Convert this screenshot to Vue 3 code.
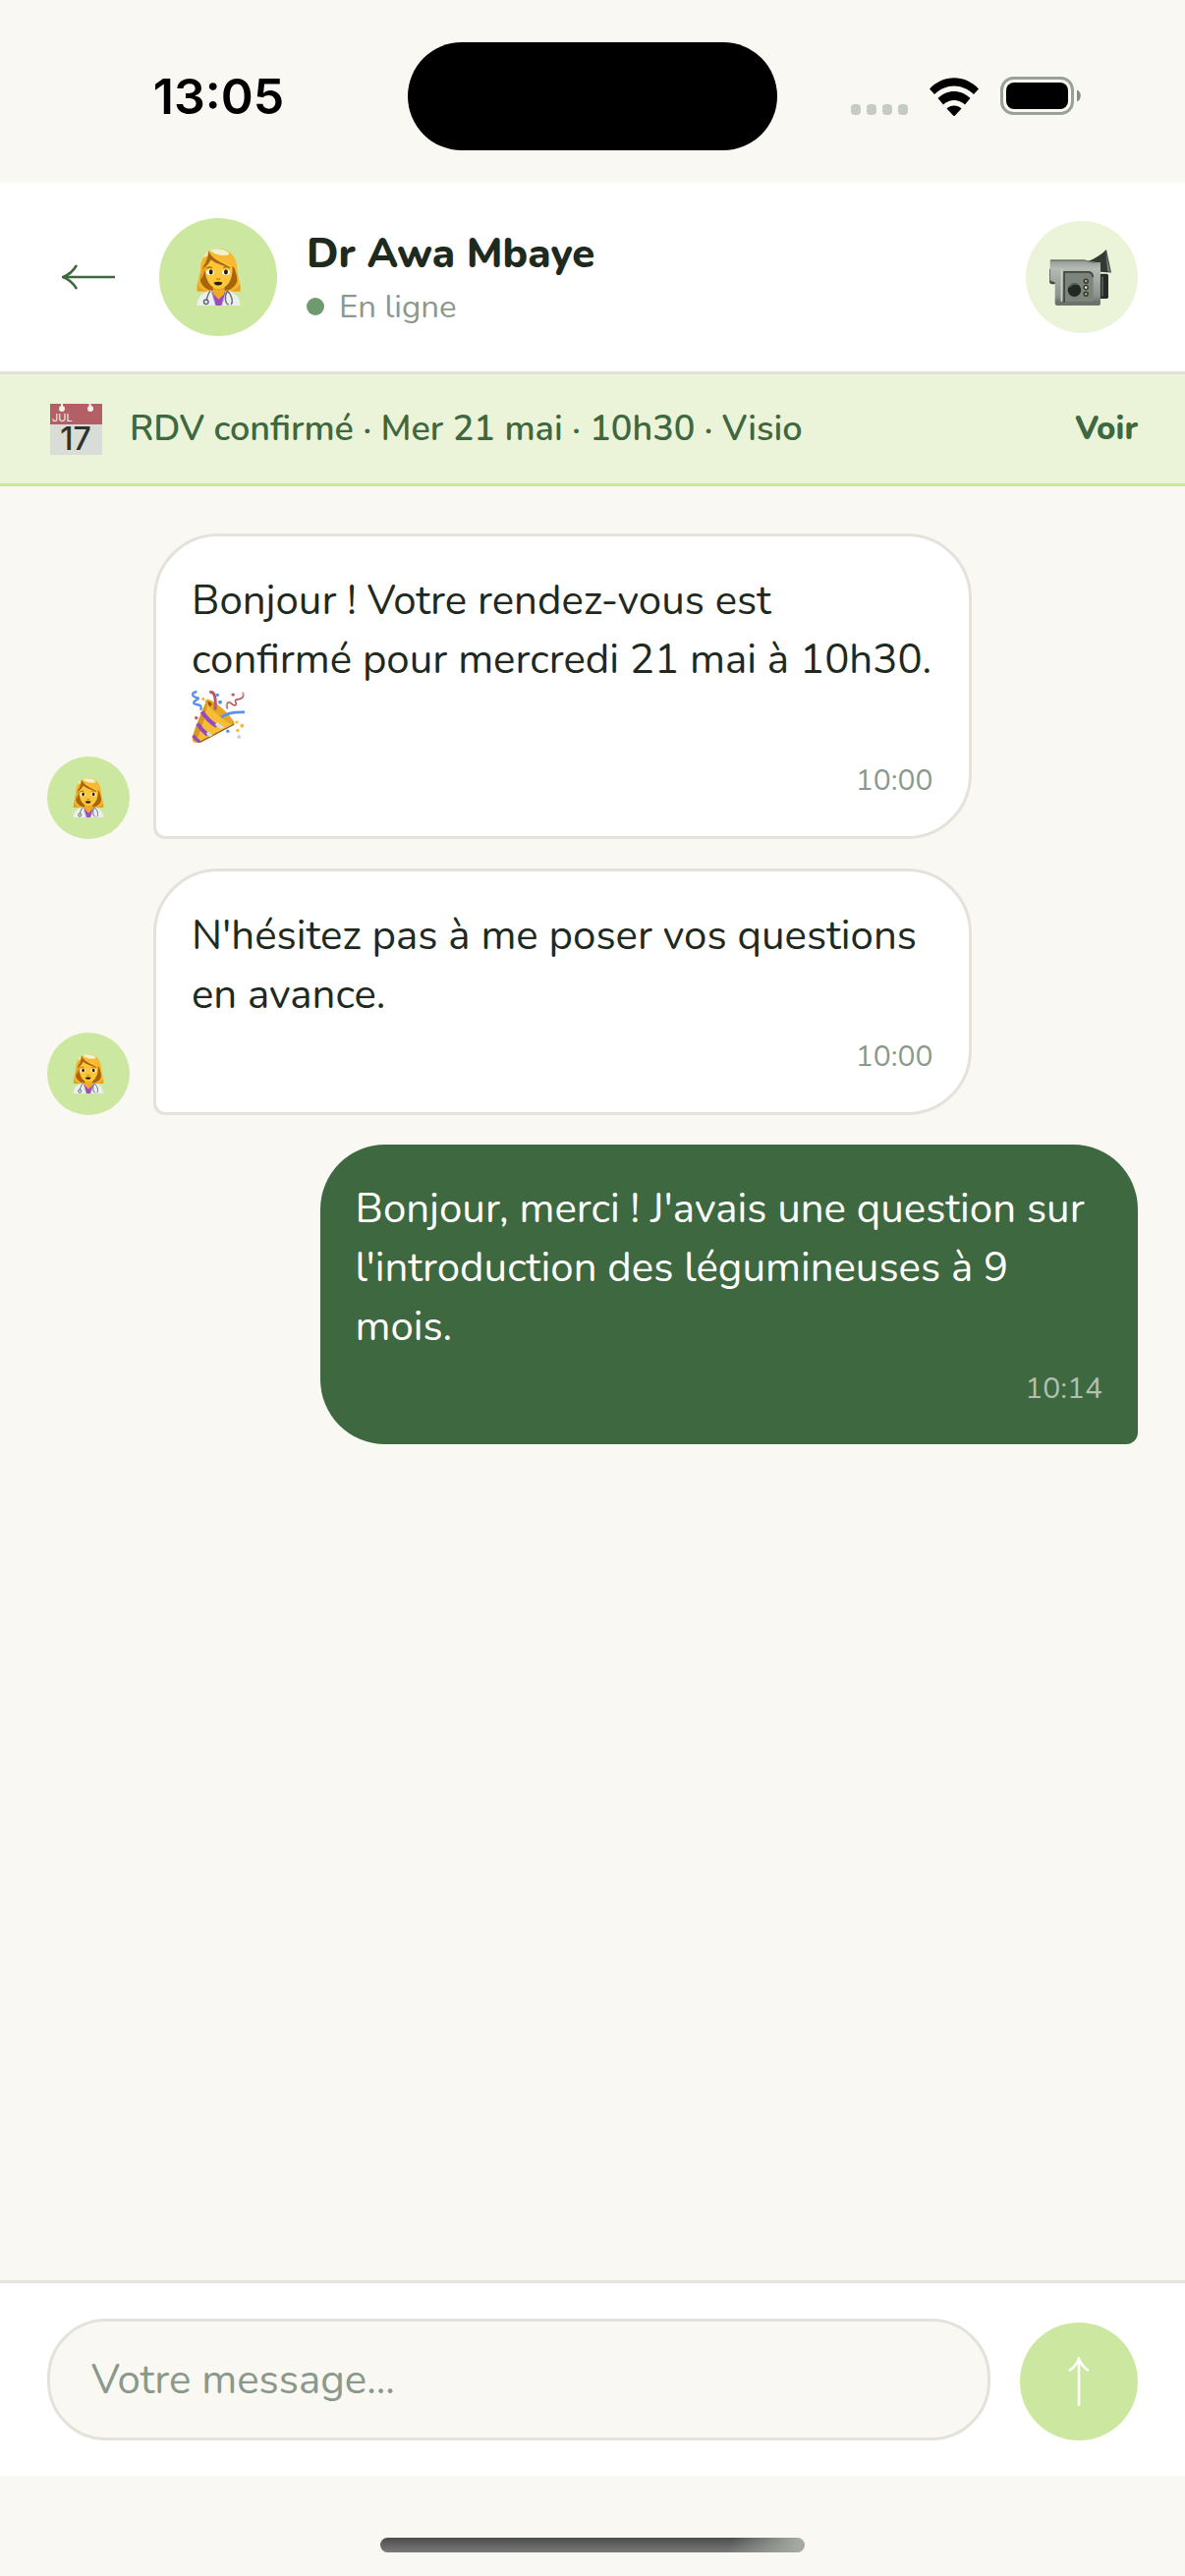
<script setup>
import { ref } from 'vue'

const draft = ref('')

const messages = [
  {
    id: 1,
    mine: false,
    text: 'Bonjour ! Votre rendez-vous est confirmé pour mercredi 21 mai à 10h30.',
    party: true,
    time: '10:00',
  },
  {
    id: 2,
    mine: false,
    text: "N'hésitez pas à me poser vos questions en avance.",
    time: '10:00',
  },
  {
    id: 3,
    mine: true,
    text: "Bonjour, merci ! J'avais une question sur l'introduction des légumineuses à 9 mois.",
    time: '10:14',
  },
]
</script>

<template>
  <div class="screen">
    <!-- shared drawing, used by every avatar -->
    <svg class="sprite" aria-hidden="true">
      <symbol id="doctor" viewBox="0 0 135 175">
        <path d="M68 0C34 0 14 26 12 58C11 82 0 98 1 131H134C134 98 125 82 124 58C122 26 102 0 68 0Z" fill="#f6b62c" />
        <path d="M2 108V131H134V108C128 120 118 126 108 130H28C18 126 8 120 2 108Z" fill="#e5a023" />
        <path d="M22 48C16 76 10 88 12 102C18 116 30 126 46 130H92C108 124 118 116 124 102C126 86 118 68 112 48Z" fill="#a8640b" />
        <path d="M50 112H86V142L68 158L50 142Z" fill="#e8a51d" />
        <path d="M26 62C26 38 46 24 68 24S110 38 110 64C110 98 92 124 68 124S26 98 26 62Z" fill="#fcc63a" />
        <path d="M38 10C30 24 26 44 18 60C14 72 12 84 13 96C20 84 26 66 31 54C37 42 42 34 40 26Z" fill="#e9a21f" />
        <path d="M37 8C50 30 88 40 122 62C120 28 100 2 68 0C56 0 46 3 37 8Z" fill="#fbb933" />
        <path d="M40 6C56 -1 82 -2 98 12C101 15 99 19 94 20C76 24 56 18 40 6Z" fill="#eef2cf" />
        <path d="M20 28C24 18 29 12 35 9L33 24C28 24 24 26 20 28Z" fill="#f2edb8" />
        <path d="M37 6C42 32 80 42 106 60C84 52 60 48 44 34C36 50 24 58 16 62C28 48 36 30 37 6Z" fill="#a96510" />
        <path d="M30 61Q38 55 47 59M82 59Q92 53 102 60" fill="none" stroke="#a66a12" stroke-width="4" />
        <ellipse cx="42" cy="73" rx="12" ry="8" fill="#fff" />
        <ellipse cx="90" cy="73" rx="12" ry="8" fill="#fff" />
        <ellipse cx="44" cy="72" rx="6" ry="8" fill="#2b1a06" />
        <ellipse cx="90" cy="72" rx="6" ry="8" fill="#2b1a06" />
        <path d="M60 92Q66 98 73 92" fill="none" stroke="#d9921c" stroke-width="5" />
        <path d="M53 104Q66 99 79 104Q78 113 66 113Q54 113 53 104Z" fill="#2a200f" />
        <path d="M44 134H92L94 175H44Z" fill="#9a4cc2" />
        <path d="M50 126H86L84 140L68 156L52 140Z" fill="#f0aa23" />
        <path d="M0 175C2 150 14 136 44 128L58 175Z" fill="#eceef0" />
        <path d="M134 175C132 150 122 136 92 128L77 175Z" fill="#eceef0" />
        <path d="M44 128L58 175M92 128L77 175" stroke="#bfc5c8" stroke-width="3" />
        <path d="M42 130C34 140 32 150 30 160M94 130C84 148 88 170 98 172M94 130C110 144 112 164 106 172" fill="none" stroke="#5b6770" stroke-width="4" />
        <circle cx="29" cy="164" r="7" fill="#dfe3e5" stroke="#5b6770" stroke-width="4" />
      </symbol>
    </svg>

    <div class="status-bar">
      <span class="clock">13:05</span>
      <div class="island"></div>
      <div class="indicators">
        <svg width="58" height="40" viewBox="0 0 58 40" aria-hidden="true">
          <rect v-for="i in 4" :key="i" :x="(i - 1) * 16" y="28" width="10" height="11" rx="4" fill="#c6cbc3" />
        </svg>
        <svg width="50" height="40" viewBox="1 0 50 40" aria-hidden="true">
          <path d="M1 12.500C15-2.500 37-2.500 51 12.500L46 18C34 6.500 18 6.500 6 18Z" />
          <path d="M9.500 22C19 12.500 33 12.500 42.500 22L37 28.500C30.500 22.500 21.500 22.500 15 28.500Z" />
          <path d="M18.500 32.500C22.500 28.500 29.500 28.500 33.500 32.500L26 40.500Z" />
        </svg>
        <svg width="83" height="40" viewBox="0 0 83 40" aria-hidden="true">
          <rect x="1.500" y="1.500" width="72" height="36" rx="12" fill="none" stroke="#9aa197" stroke-width="3" />
          <rect x="6" y="6" width="63" height="27" rx="8" />
          <path d="M78 13.500C83 15 83 24 78 25.500Z" fill="#858c83" />
        </svg>
      </div>
    </div>

    <header class="header">
      <button class="back" type="button" aria-label="Retour">
        <svg width="54" height="26" viewBox="1 1 54 26" aria-hidden="true">
          <path d="M55 14H3" fill="none" stroke="#3e693e" stroke-width="2.500" />
          <path d="M16 2C13 7 8 12 2 14C8 16 13 21 16 26" fill="none" stroke="#3e693e" stroke-width="2.500" />
        </svg>
      </button>
      <div class="avatar">
        <svg width="45" height="58" aria-hidden="true"><use href="#doctor" /></svg>
      </div>
      <div class="contact">
        <h1 class="name">Dr Awa Mbaye</h1>
        <p class="presence"><span class="dot"></span>En ligne</p>
      </div>
      <button class="video" type="button" aria-label="Appel vidéo">
        <svg width="66" height="57" viewBox="205 192 197 170" aria-hidden="true">
          <defs>
            <linearGradient id="metal" x1="0" y1="0" x2="0" y2="1">
              <stop offset="0" stop-color="#8f958f" />
              <stop offset="0.2" stop-color="#b5bab5" />
              <stop offset="0.8" stop-color="#8c928c" />
              <stop offset="1" stop-color="#5d625d" />
            </linearGradient>
          </defs>
          <path d="M310 230C340 224 362 208 378 192L393 262L360 260V236Z" fill="#333a34" />
          <path d="M376 196L382 258L390 260Z" fill="#788078" />
          <rect x="356" y="266" width="28" height="75" rx="5" fill="#262b27" />
          <path d="M366 274V334" stroke="#666d67" stroke-width="4" />
          <rect x="205" y="248" width="22" height="49" rx="7" fill="#444a45" />
          <path d="M207 226Q207 222 212 222H310Q340 234 360 230V356Q360 361 354 361H228Q222 361 222 355V292L207 286Z" fill="url(#metal)" />
          <path d="M208 226H314L344 232" fill="none" stroke="#737a74" stroke-width="4" />
          <path d="M226 348H358V361H226Z" fill="#6c726c" />
          <path d="M248 258H326Q338 260 338 274V350H248Z" fill="#7b857b" />
          <path d="M250 352V260H324Q336 261 337 276" fill="none" stroke="#3f4740" stroke-width="5" />
          <path d="M242 250V350" stroke="#c9cec8" stroke-width="5" />
          <circle cx="281" cy="315" r="20" fill="#222823" />
          <path d="M266 306Q275 292 292 298" fill="none" stroke="#555c55" stroke-width="5" />
          <g stroke="#303630" stroke-width="4">
            <circle cx="316" cy="288" r="6" fill="#b5a26a" />
            <circle cx="316" cy="307" r="6" fill="#e4e6e4" />
            <circle cx="316" cy="327" r="6" fill="#b5a26a" />
          </g>
        </svg>
      </button>
    </header>

    <div class="banner">
      <svg width="60" height="60" viewBox="0 0 60 60" aria-hidden="true">
        <rect x="3" y="4" width="53" height="52" fill="#dadcd8" />
        <rect x="3" y="4" width="53" height="21" fill="#b45f66" />
        <path d="M15 4V8M43 4L45 8" stroke="#eef3e4" stroke-width="2" />
        <circle cx="15" cy="9" r="3" fill="#eef3e4" />
        <circle cx="44" cy="9" r="3" fill="#eef3e4" />
        <text class="cal-month" x="5" y="22">JUL</text>
        <text class="cal-day" x="29" y="51" text-anchor="middle">17</text>
      </svg>
      <span class="banner-text">RDV confirmé · Mer 21 mai · 10h30 · Visio</span>
      <a class="banner-link" href="#rdv">Voir</a>
    </div>

    <main class="messages">
      <div
        v-for="message in messages"
        :key="message.id"
        class="row"
        :class="{ mine: message.mine }"
      >
        <div v-if="!message.mine" class="avatar small">
          <svg width="32" height="40" aria-hidden="true"><use href="#doctor" /></svg>
        </div>
        <div class="bubble">
          <p class="text">
            {{ message.text }}
            <svg v-if="message.party" class="party" width="54" height="54" viewBox="48 40 160 160" aria-hidden="true">
              <path d="M96 68C120 76 158 108 176 141L68 201Q48 202 50 186Z" fill="#f6bd35" />
              <path d="M96 68C84 92 56 158 50 186Q54 196 62 198C76 160 96 110 96 68Z" fill="#d9991f" />
              <path d="M88 76Q92 66 102 70C126 80 160 112 176 136Q179 146 170 146C146 134 108 102 88 76Z" fill="#e5a727" />
              <path d="M96 76Q104 74 110 84L102 92Z" fill="#8d5308" />
              <path d="M68 201L176 144" stroke="#93600f" stroke-width="4" />
              <path d="M79 106C92 126 108 140 124 150" fill="none" stroke="#9549c4" stroke-width="12" />
              <path d="M118 146L136 158L146 154L126 138Z" fill="#dcdde0" />
              <path d="M66 142C74 156 84 166 96 176" fill="none" stroke="#9549c4" stroke-width="12" />
              <path d="M92 172L102 182L112 177L98 166Z" fill="#dcdde0" />
              <path d="M53 178Q60 190 72 197" fill="none" stroke="#9549c4" stroke-width="10" />
              <path d="M102 48C118 44 122 62 119 101" fill="none" stroke="#b85b64" stroke-width="9" />
              <path d="M64 46C42 50 52 62 64 64C80 66 48 74 56 82C66 88 82 82 75 102" fill="none" stroke="#5b8ff0" stroke-width="7" />
              <path d="M138 123Q160 106 208 108" fill="none" stroke="#5b8ff0" stroke-width="8" />
              <path d="M156 98C150 76 162 76 168 82C178 92 186 86 180 76C178 66 190 72 198 66Q208 60 202 48" fill="none" stroke="#b85b64" stroke-width="5" />
              <path d="M152 92C150 74 160 72 168 78M198 62Q206 52 202 46" fill="none" stroke="#c9cbcb" stroke-width="3" />
              <g fill="#5b8ff0">
                <circle cx="126" cy="56" r="5" />
                <circle cx="134" cy="78" r="6" />
                <circle cx="157" cy="165" r="5" />
              </g>
              <g fill="#f1bd3d">
                <circle cx="83" cy="68" r="5" />
                <circle cx="184" cy="138" r="5" />
                <circle cx="200" cy="149" r="6" />
                <circle cx="187" cy="163" r="5" />
              </g>
              <g fill="#b85b64">
                <circle cx="173" cy="55" r="5" />
                <circle cx="62" cy="125" r="5" />
              </g>
              <circle cx="191" cy="182" r="6" fill="#cfd2cf" />
            </svg>
          </p>
          <time class="time">{{ message.time }}</time>
        </div>
      </div>
    </main>

    <form class="composer" @submit.prevent="draft = ''">
      <input
        v-model="draft"
        class="field"
        type="text"
        placeholder="Votre message..."
        aria-label="Votre message"
      />
      <button class="send" type="submit" aria-label="Envoyer">
        <svg width="24" height="50" viewBox="0 0 24 50" aria-hidden="true">
          <path d="M12 50V2" fill="none" stroke="#fff" stroke-width="2.500" />
          <path d="M2 14C7 11 10 7 12 2C14 7 17 11 22 14" fill="none" stroke="#fff" stroke-width="2.500" />
        </svg>
      </button>
    </form>

    <div class="home-area">
      <div class="home-indicator"></div>
    </div>
  </div>
</template>

<style>
body {
  margin: 0;
  background: #f9f8f3;
}
</style>

<style scoped>
.screen {
  display: flex;
  flex-direction: column;
  min-height: 100vh;
  background: #f9f8f3;
  color: #1f2a1f;
  font-family: Nunito, "Open Sans", "Noto Sans", sans-serif;
}

.screen * {
  box-sizing: border-box;
}

svg {
  display: block;
  flex-shrink: 0;
}

button {
  padding: 0;
  border: none;
  font: inherit;
  cursor: pointer;
}

.sprite {
  position: absolute;
  width: 0;
  height: 0;
}

/* Status bar */
.status-bar {
  display: grid;
  grid-template-columns: 1fr 376px 1fr;
  align-items: center;
  height: 186px;
  padding: 9px 30px 0;
}

.clock {
  color: #000;
  font-family: Inter, sans-serif;
  font-size: 50px;
  font-weight: 600;
  line-height: 60px;
  text-align: center;
}

.island {
  height: 110px;
  border-radius: 55px;
  background: #000;
}

.indicators {
  display: flex;
  justify-content: center;
  gap: 22px;
}

/* Header */
.header {
  display: flex;
  align-items: center;
  gap: 30px;
  padding: 36px 48px;
  border-bottom: 3px solid #e4e2db;
  background: #fff;
}

.back {
  display: flex;
  align-items: center;
  justify-content: center;
  width: 84px;
  height: 84px;
  background: transparent;
}

.avatar {
  display: flex;
  flex-shrink: 0;
  align-items: center;
  justify-content: center;
  width: 120px;
  height: 120px;
  border-radius: 50%;
  background: #cce8a0;
}

.avatar.small {
  width: 84px;
  height: 84px;
}

.contact {
  display: flex;
  flex: 1;
  flex-direction: column;
  gap: 3px;
}

.name {
  margin: 0;
  font-size: 42px;
  font-weight: 800;
  line-height: 57px;
}

.presence {
  display: flex;
  align-items: center;
  gap: 15px;
  margin: 0;
  color: #8a998c;
  font-size: 33px;
  line-height: 45px;
}

.dot {
  width: 18px;
  height: 18px;
  border-radius: 50%;
  background: #6f9a70;
}

.video {
  display: flex;
  align-items: center;
  justify-content: center;
  width: 114px;
  height: 114px;
  border-radius: 50%;
  background: #ebf4d9;
}

/* Appointment banner */
.banner {
  display: flex;
  align-items: center;
  gap: 24px;
  height: 114px;
  padding: 0 48px;
  border-bottom: 3px solid #cce8a0;
  background: #ebf4d9;
  color: #3e683f;
  line-height: 48px;
}

.cal-month {
  fill: #eef3e4;
  font-family: Inter, sans-serif;
  font-size: 11px;
}

.cal-day {
  fill: #2d332d;
  font-family: Inter, sans-serif;
  font-size: 32px;
  font-weight: 500;
}

.banner-text {
  flex: 1;
  font-size: 36px;
  font-weight: 600;
}

.banner-link {
  color: inherit;
  font-size: 33px;
  font-weight: 800;
  text-decoration: none;
}

/* Conversation */
.messages {
  display: flex;
  flex: 1;
  flex-direction: column;
  gap: 30px;
  padding: 48px;
}

.row {
  display: flex;
  align-items: flex-end;
  gap: 24px;
}

.row.mine {
  justify-content: flex-end;
}

.bubble {
  width: 75%;
  padding: 36px;
  border: 3px solid #e4e2db;
  border-radius: 66px 66px 66px 12px;
  background: #fff;
}

.text {
  margin: 0;
  font-size: 42px;
  line-height: 60px;
}

.party {
  display: inline-block;
  vertical-align: top;
}

.time {
  display: block;
  margin-top: 12px;
  color: #8a998c;
  font-size: 30px;
  line-height: 41px;
  text-align: right;
}

.mine .bubble {
  border: none;
  border-radius: 66px 66px 12px 66px;
  background: #3e683f;
  color: #fff;
}

.mine .time {
  color: #b3c0b0;
}

/* Composer */
.composer {
  display: flex;
  align-items: flex-end;
  gap: 30px;
  padding: 36px 48px;
  border-top: 3px solid #e4e2db;
  background: #fff;
}

.field {
  flex: 1;
  min-width: 0;
  height: 124px;
  padding: 0 42px;
  border: 3px solid #e4e2db;
  border-radius: 60px;
  outline: none;
  background: #f9f8f3;
  color: #1f2a1f;
  font-family: inherit;
  font-size: 42px;
}

.field::placeholder {
  color: #8a998c;
  opacity: 1;
}

.send {
  display: flex;
  align-items: center;
  justify-content: center;
  width: 120px;
  height: 120px;
  border-radius: 50%;
  background: #cce8a0;
}

.home-area {
  display: flex;
  align-items: flex-end;
  justify-content: center;
  height: 102px;
  padding-bottom: 24px;
}

.home-indicator {
  width: 432px;
  height: 15px;
  border-radius: 8px;
  background:
    linear-gradient(100deg, transparent 82%, #a3aaa3 98%),
    linear-gradient(#4b4d4b, #7a7a7a);
}
</style>
